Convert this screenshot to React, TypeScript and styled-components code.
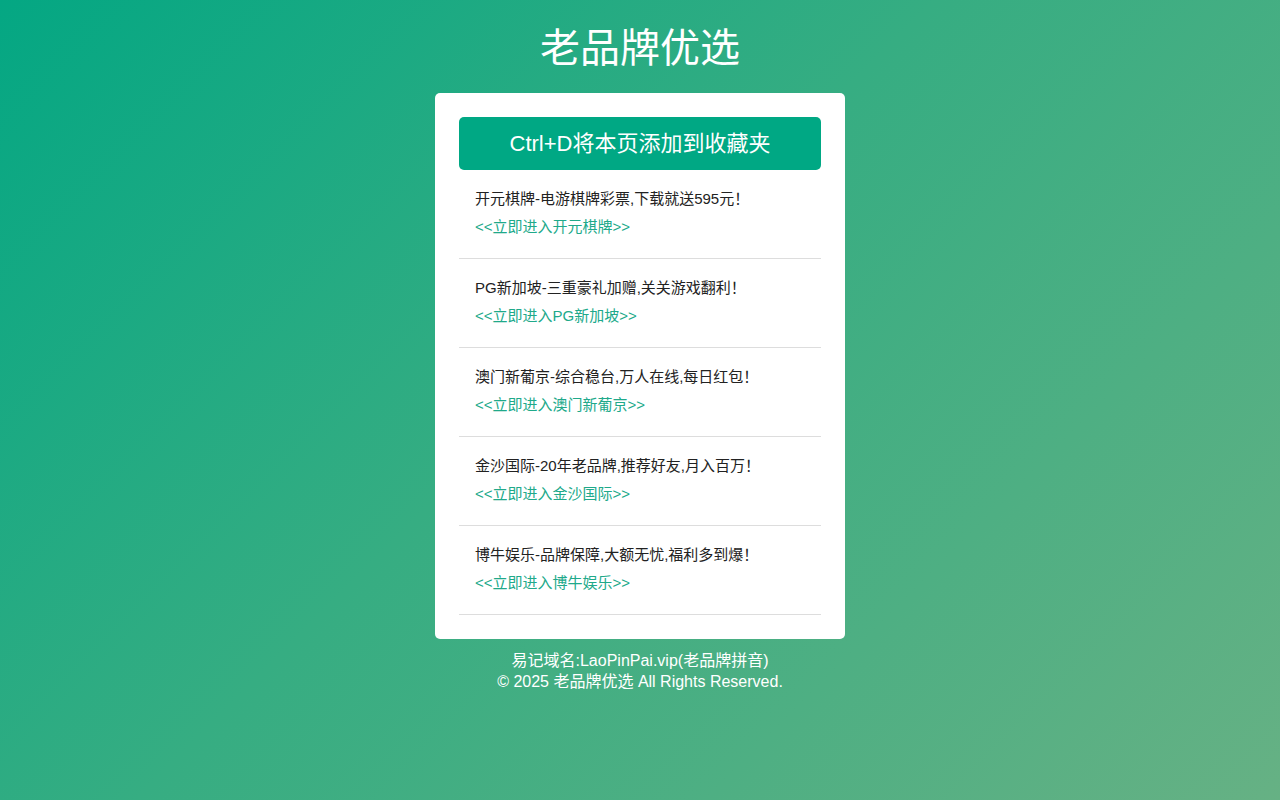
import styled, { createGlobalStyle } from 'styled-components';

const GlobalStyle = createGlobalStyle`
  html, body {
    margin: 0;
    padding: 0;
    min-height: 100%;
  }
  body {
    min-height: 100vh;
    background: linear-gradient(135deg, #04a783 0%, #36ad82 45%, #66b184 100%);
    background-attachment: fixed;
    font-family: "Liberation Sans", Arial, "Noto Sans CJK SC", sans-serif;
    color: #222;
  }
`;

const brands = [
  { name: '开元棋牌', slogan: '电游棋牌彩票,下载就送595元！' },
  { name: 'PG新加坡', slogan: '三重豪礼加赠,关关游戏翻利！' },
  { name: '澳门新葡京', slogan: '综合稳台,万人在线,每日红包！' },
  { name: '金沙国际', slogan: '20年老品牌,推荐好友,月入百万！' },
  { name: '博牛娱乐', slogan: '品牌保障,大额无忧,福利多到爆！' },
];

export default function App() {
  return (
    <>
      <GlobalStyle />
      <Page>
        <Title>老品牌优选</Title>
        <Card>
          <BookmarkButton>Ctrl+D将本页添加到收藏夹</BookmarkButton>
          <List>
            {brands.map((b) => (
              <Item key={b.name}>
                <Slogan>
                  {b.name}-{b.slogan}
                </Slogan>
                <EnterLink href="#">&lt;&lt;立即进入{b.name}&gt;&gt;</EnterLink>
              </Item>
            ))}
          </List>
        </Card>
        <Footer>
          <div>易记域名:LaoPinPai.vip(老品牌拼音)</div>
          <div>© 2025 老品牌优选 All Rights Reserved.</div>
        </Footer>
      </Page>
    </>
  );
}

const Page = styled.div`
display: flex;
flex-direction: column;
align-items: center;
padding-top: 24px;
`;

const Title = styled.h1`
margin: 0 0 21px 0;
font-size: 40px;
font-weight: normal;
line-height: 48px;
color: #fff;
`;

const Card = styled.div`
width: 362px;
padding: 24px;
background: #fff;
border-radius: 5px;
`;

const BookmarkButton = styled.div`
height: 53px;
box-sizing: border-box;
padding-bottom: 5px;
display: flex;
align-items: center;
justify-content: center;
background: #00a884;
border-radius: 5px;
color: #fff;
font-size: 22px;
`;

const List = styled.div`
display: flex;
flex-direction: column;
`;

const Item = styled.div`
display: flex;
flex-direction: column;
padding: 15px 16px 17px;
border-bottom: 1px solid #dddddd;
`;

const Slogan = styled.div`
font-size: 15px;
line-height: 28px;
color: #222;
`;

const EnterLink = styled.a`
font-size: 15px;
line-height: 28px;
color: #20a98a;
text-decoration: none;
`;

const Footer = styled.div`
margin-top: 11px;
text-align: center;
color: #fff;
font-size: 16px;
line-height: 21px;
`;
